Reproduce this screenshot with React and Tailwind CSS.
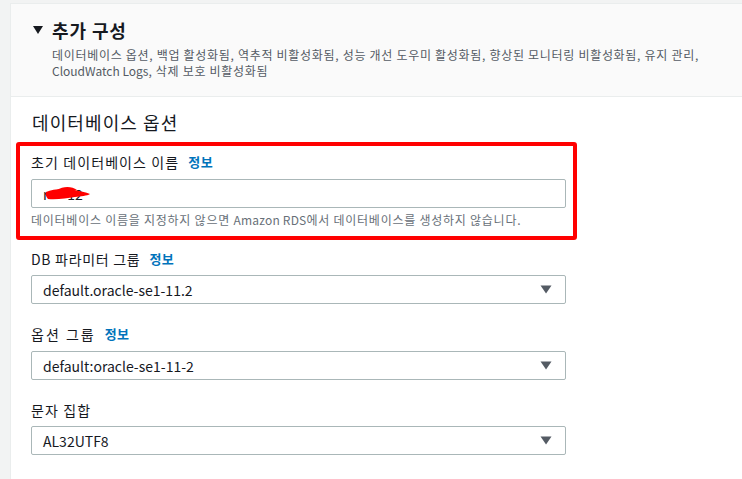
import React from "react";

const font = { fontFamily: '"Noto Sans CJK KR", "Noto Sans", sans-serif' };

function Caret() {
  return (
    <svg width="12" height="9" viewBox="0 0 12 9" className="shrink-0">
      <path d="M0.5 0.5 L11.5 0.5 L6 8.5 Z" fill="#545b64" />
    </svg>
  );
}

function Select({ value }) {
  return (
    <div className="w-[535px] h-[29px] border border-[#aab7b8] rounded-[2px] bg-white flex items-center pl-[11px] pr-[13px] justify-between">
      <span className="text-[14px] leading-[20px] text-[#16191f]">{value}</span>
      <Caret />
    </div>
  );
}

function Label({ text, info, track = "tracking-[1.1px]" }) {
  return (
    <div className="flex items-center gap-[9px] text-[14px] leading-[20px] text-[#16191f]">
      <span className={track}>{text}</span>
      {info && <span className="text-[#0073bb] font-bold text-[13px] tracking-[0.5px]">정보</span>}
    </div>
  );
}

export default function App() {
  return (
    <div style={font} className="w-[742px] h-[479px] bg-[#f2f3f3] pt-[3px] pl-[10px] overflow-hidden">
      <div className="h-full bg-white border-l border-t border-[#eaeded] flex flex-col">
        <div className="h-[93px] bg-[#fafafa] border-b border-[#eaeded] pt-[15px] pl-[22px] shrink-0">
          <div className="flex items-center">
            <svg width="10" height="8" viewBox="0 0 10 8" className="mr-[9px]">
              <path d="M0 0 L10 0 L5 8 Z" fill="#16191f" />
            </svg>
            <span className="text-[18px] leading-[22px] font-bold text-[#16191f] tracking-[0.9px]">추가 구성</span>
          </div>
          <div className="ml-[19px] mt-[6px] text-[12px] leading-[16px] text-[#545b64] w-[670px] tracking-[0.7px]">
            데이터베이스 옵션, 백업 활성화됨, 역추적 비활성화됨, 성능 개선 도우미 활성화됨, 향상된 모니터링 비활성화됨, 유지 관리, <span className="tracking-[0px]">CloudWatch Logs</span>, 삭제 보호 비활성화됨
          </div>
        </div>
        <div className="pl-[5px] pt-[14px]">
          <div className="ml-[16px] text-[18px] leading-[22px] text-[#16191f] tracking-[1.1px]">데이터베이스 옵션</div>
          <div className="mt-[9px] w-[561px] border-4 border-[#ff0000] rounded-[3px] pl-[11px] pt-[6px] pb-[8px]">
            <Label text="초기 데이터베이스 이름" info />
            <div className="mt-[7px] relative w-[535px] h-[29px] border border-[#aab7b8] rounded-[2px] bg-white flex items-center pl-[11px]">
              <span className="text-[14px] leading-[20px] text-[#16191f]">r&nbsp;&nbsp;&nbsp;&nbsp;&nbsp;&nbsp;12</span>
              <svg className="absolute left-[13px] top-[6px]" width="46" height="16" viewBox="0 0 46 16">
                <path d="M1 6 C8 3, 18 2, 28 4 C35 5, 41 6, 45 8 C42 10, 36 10, 30 11 C22 12, 12 14, 3 13 C1 11, 0 8, 1 6 Z" fill="#ff0000" />
                <path d="M12 4 C18 0, 27 0, 32 4 L24 7 Z" fill="#ff0000" />
              </svg>
            </div>
            <div className="mt-[4px] text-[12px] leading-[16px] text-[#687078] tracking-[0.75px]">
              데이터베이스 이름을 지정하지 않으면 <span className="tracking-[0.2px]">Amazon RDS</span>에서 데이터베이스를 생성하지 않습니다.
            </div>
          </div>
          <div className="ml-[15px] mt-[9px]">
            <Label text="DB 파라미터 그룹" info track="tracking-[0.7px]" />
            <div className="mt-[6px]">
              <Select value="default.oracle-se1-11.2" />
            </div>
            <div className="mt-[20px]">
              <Label text="옵션 그룹" info track="tracking-[2px]" />
            </div>
            <div className="mt-[7px]">
              <Select value="default:oracle-se1-11-2" />
            </div>
            <div className="mt-[20px]">
              <Label text="문자 집합" />
            </div>
            <div className="mt-[6px]">
              <Select value="AL32UTF8" />
            </div>
          </div>
        </div>
      </div>
    </div>
  );
}
